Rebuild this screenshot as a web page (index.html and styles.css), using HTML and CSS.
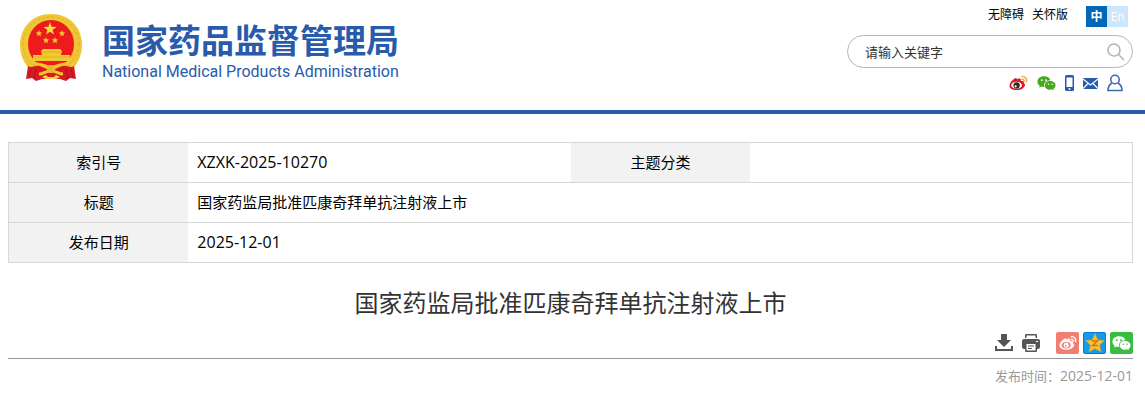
FILE: index.html
```html
<!DOCTYPE html>
<html lang="zh-CN">
  <head>
    <meta charset="UTF-8" />
    <meta name="viewport" content="width=device-width, initial-scale=1.0" />
    <title>国家药监局批准匹康奇拜单抗注射液上市</title>
    <link rel="stylesheet" href="styles.css">
  </head>

  <body>
    <svg class="sprite" aria-hidden="true">
      <symbol id="weibo-body" viewBox="0 0 20 16">
        <path fill="currentColor" d="M8 4C11 2.400 13 3 12.500 6C15 5.400 16.500 6.800 15.300 8.200C17.300 9 17.400 11.300 15 13.200C11.500 16.200 3.800 16.300 1.300 13.300C-.700 10.500 1.600 6.500 4.800 4C6.800 2.400 8.500 2.300 8 4Z"/>
      </symbol>
      <symbol id="wechat" viewBox="0 0 20 16">
        <path fill="currentColor" d="M7.500 1C3.400 1 .5 3.500.5 6.600C.5 8.400 1.400 9.900 2.900 10.900L2.300 13L4.700 11.800C5.700 12.100 6.500 12.200 7.600 12.100C6.600 8.400 9.400 5.200 14 5.200C13.400 2.700 10.800 1 7.500 1Z"/>
        <path fill="currentColor" d="M13.800 6C10.400 6 8.200 8 8.200 10.500C8.200 13.100 10.600 15 13.800 15C14.500 15 15.200 14.900 15.800 14.700L17.800 15.700L17.300 14C18.700 13.100 19.500 11.900 19.500 10.500C19.500 8 17 6 13.800 6Z"/>
        <g class="eyes">
          <circle cx="5" cy="5" r="1"/><circle cx="9.500" cy="5" r="1"/>
          <circle cx="12" cy="9.300" r=".8"/><circle cx="15.800" cy="9.300" r=".8"/>
        </g>
      </symbol>
    </svg>

    <header class="header">
      <a class="logo" href="#">
        <svg class="emblem" viewBox="0 0 62 68" aria-hidden="true">
          <!-- 麦穗圈 -->
          <path fill="#efc736" d="M31 0C49 0 62 13 62 31C62 42 57 52 49 58H13C5 52 0 42 0 31C0 13 13 0 31 0Z"/>
          <ellipse cx="31" cy="30" rx="28" ry="27" fill="none" stroke="#dfb02a" stroke-dasharray="3 2"/>
          <ellipse cx="31" cy="30" rx="23" ry="24" fill="#ed1b1b"/>
          <!-- 五星 -->
          <path fill="#f8dc3c" d="M30 8L31.600 12.800L36.500 12.900L32.600 15.900L34 20.500L30 17.700L26 20.500L27.400 15.900L23.500 12.900L28.400 12.800Z"/>
          <g fill="#f4cb32">
            <path id="star" d="M19 16L19.900 18.300L22.300 18.400L20.400 19.900L21 22.200L19 20.900L17 22.200L17.600 19.900L15.700 18.400L18.100 18.300Z"/>
            <use href="#star" x="23"/>
            <use href="#star" x="7" y="7"/>
            <use href="#star" x="16" y="7"/>
          </g>
          <!-- 天安门 -->
          <path fill="#f0cb30" d="M23 35H40L42 37L41 41H50V47H13V41H22L21 37Z"/>
          <path d="M22 38H41M13 43H50" stroke="#dda51f" stroke-width=".7"/>
          <!-- 红绸 -->
          <path fill="#d81922" d="M8 52C12 55 16 50 20 52L31 57L42 52C46 50 50 55 54 52L56 65L50 64L46 67L40 65H22L16 67L12 64L6 65Z"/>
          <path d="M11 55L9 64M16 55L14 65M46 55L48 65M51 55L53 64" stroke="#a80f1b" stroke-width=".8"/>
          <path fill="none" stroke="#f1c72b" stroke-width="3" d="M15 50C22 49 24 53 31 53S40 49 47 50M19 60C24 60 25 57 31 57S38 60 43 60"/>
          <circle cx="31" cy="55" r="4" fill="#ebba2a"/>
          <path fill="#f5d34b" d="M22 63L26 61L28 63H34L36 61L40 63L36 65H26Z"/>
        </svg>
        <span class="logo-text">
          <span class="logo-cn">国家药品监督管理局</span>
          <span class="logo-en" lang="en">National Medical Products Administration</span>
        </span>
      </a>

      <div class="tools">
        <nav class="top-links">
          <a href="#">无障碍</a>
          <a href="#">关怀版</a>
          <span class="lang">
            <a class="active" href="#">中</a><a href="#" lang="en">En</a>
          </span>
        </nav>

        <form class="search">
          <input type="text" placeholder="请输入关键字" aria-label="请输入关键字" />
          <button type="button" aria-label="搜索">
            <svg width="18" height="18" viewBox="0 0 18 18" fill="none" stroke="#b5b5b5" stroke-width="1.600">
              <circle cx="7" cy="7" r="6"/><path d="M11.500 11.500L17 17"/>
            </svg>
          </button>
        </form>

        <nav class="social">
          <a href="#" aria-label="微博">
            <svg width="19" height="16" viewBox="0 0 20 16">
              <use href="#weibo-body" color="#e01920"/>
              <ellipse cx="8" cy="10.300" rx="5.600" ry="3.700" fill="#fff"/>
              <circle cx="8" cy="10.500" r="3.300" fill="#2d2525"/>
              <circle cx="7" cy="11.500" r="1.200" fill="#fff"/>
              <path d="M13 1.200C17 .2 19.500 3.500 18.200 7M13.200 4C15.300 3.500 16.200 5 15.700 6.500" fill="none" stroke="#f3a62c" stroke-width="1.500"/>
            </svg>
          </a>
          <a class="green" href="#" aria-label="微信">
            <svg width="19" height="16"><use href="#wechat"/></svg>
          </a>
          <a href="#" aria-label="手机版">
            <svg width="9" height="16" viewBox="0 0 9 16">
              <rect width="9" height="16" rx="1.500" fill="#285bac"/>
              <rect x="1.500" y="2.500" width="6" height="9.500" fill="#fff"/>
              <circle cx="4.500" cy="14" r="1" fill="#fff"/>
            </svg>
          </a>
          <a href="#" aria-label="邮箱">
            <svg width="15" height="11" viewBox="0 0 15 11">
              <rect width="15" height="11" fill="#285bac"/>
              <path d="M0 1L7.500 7L15 1M0 10.500L5.300 5.300M15 10.500L9.700 5.300" fill="none" stroke="#fff" stroke-width="1.200"/>
            </svg>
          </a>
          <a href="#" aria-label="个人中心">
            <svg width="16" height="18" viewBox="0 0 16 18" fill="none" stroke="#4568b5" stroke-width="1.600">
              <circle cx="8" cy="5.500" r="4.300"/>
              <path d="M5 9C2.500 10.500 1 12.500 1 16.500H15C15 12.500 13.500 10.500 11 9"/>
            </svg>
          </a>
        </nav>
      </div>
    </header>

    <main class="content">
      <table class="info">
        <tr>
          <th scope="row">索引号</th>
          <td class="latin">XZXK-2025-10270</td>
          <th scope="row">主题分类</th>
          <td></td>
        </tr>
        <tr>
          <th scope="row">标题</th>
          <td colspan="3">国家药监局批准匹康奇拜单抗注射液上市</td>
        </tr>
        <tr>
          <th scope="row">发布日期</th>
          <td class="latin" colspan="3">2025-12-01</td>
        </tr>
      </table>

      <h1 class="title">国家药监局批准匹康奇拜单抗注射液上市</h1>

      <div class="actions">
        <button type="button" aria-label="下载">
          <svg width="18" height="18" viewBox="0 0 18 18" fill="#555">
            <path d="M6 0H12V6H16L9 13L2 6H6Z"/>
            <path d="M0 12H2V15H16V12H18V17H0Z"/>
          </svg>
        </button>
        <button type="button" aria-label="打印">
          <svg width="18" height="18" viewBox="0 0 18 18">
            <path fill="#555" d="M4 0H14Q15 0 15 1V4H3V1Q3 0 4 0ZM2 5H16Q18 5 18 7V13Q18 15 16 15H15V17Q15 18 14 18H4Q3 18 3 17V15H2Q0 15 0 13V7Q0 5 2 5Z"/>
            <path fill="#fff" d="M4.500 1.500H13.500V5H4.500ZM4.500 10H13.500V16.500H4.500ZM14 7H16V8H14Z"/>
            <path d="M6 12H12M6 14.500H10" stroke="#555"/>
          </svg>
        </button>
        <div class="share">
          <button class="share-weibo" type="button" aria-label="分享到微博">
            <svg width="18" height="16" viewBox="0 0 20 16">
              <use href="#weibo-body" color="#fff"/>
              <ellipse cx="8" cy="10.500" rx="5" ry="3.500" fill="#f17e70"/>
              <circle cx="8" cy="10.500" r="2.800" fill="#fff"/>
              <circle cx="7.500" cy="11" r="1" fill="#f17e70"/>
              <path d="M13 1.200C17 .2 19.500 3.500 18.200 7M13.200 4C15.300 3.500 16.200 5 15.700 6.500" fill="none" stroke="#fff" stroke-width="1.400"/>
            </svg>
          </button>
          <button class="share-qzone" type="button" aria-label="分享到QQ空间">
            <svg width="20" height="20" viewBox="0 0 20 20">
              <path fill="#fdc12b" stroke="#e79b13" stroke-width=".5" d="M10 .5L12.800 7L19.500 7.600L14.500 12L16 19L10 15.500L4 19L5.500 12L.5 7.600L7.200 7Z"/>
              <path d="M7 8H12.500L7.500 12.500H13" fill="none" stroke="#c9780f" stroke-width="1.300"/>
            </svg>
          </button>
          <button class="share-wechat" type="button" aria-label="分享到微信">
            <svg width="19" height="16"><use href="#wechat"/></svg>
          </button>
        </div>
      </div>

      <p class="publish">发布时间：<time datetime="2025-12-01">2025-12-01</time></p>
    </main>
  </body>
</html>
```

FILE: styles.css
```css
* {
  box-sizing: border-box;
}

body {
  margin: 0;
  font-family: "Open Sans", "Noto Sans CJK SC", sans-serif;
  font-size: 15px;
  color: #000;
  background: #fff;
}

a {
  color: inherit;
  text-decoration: none;
}

button {
  display: flex;
  align-items: center;
  justify-content: center;
  padding: 0;
  border: 0;
  background: none;
  cursor: pointer;
}

svg {
  display: block;
}

.sprite {
  display: none;
}

/* 页头 */
.header {
  display: flex;
  justify-content: space-between;
  align-items: flex-start;
  padding: 6px 12px 18px 20px;
  border-bottom: 4px solid #285bac;
}

.logo {
  display: flex;
  gap: 20px;
  padding-top: 8px;
  color: #285bac;
}

.emblem {
  width: 62px;
  height: 68px;
}

.logo-text {
  display: flex;
  flex-direction: column;
  padding-top: 7px;
  white-space: nowrap;
}

.logo-cn {
  font-family: "Noto Sans CJK SC", sans-serif;
  font-size: 33px;
  font-weight: bold;
  line-height: 36px;
}

.logo-en {
  font-family: Roboto, "Liberation Sans", sans-serif;
  font-size: 16px;
  line-height: 30px;
}

.tools {
  display: flex;
  flex-direction: column;
  width: 286px;
}

.top-links {
  display: flex;
  justify-content: flex-end;
  gap: 8px;
  padding-right: 5px;
  font-size: 12px;
  line-height: 18px;
}

.lang {
  display: flex;
  margin-left: 10px;
  line-height: 21px;
  text-align: center;
  color: #fff;
  background: #cce6ff;
}

.lang a {
  width: 21px;
}

.lang .active {
  font-weight: bold;
  background: #0068b7;
}

.search {
  display: flex;
  align-items: center;
  height: 33px;
  margin-top: 8px;
  padding: 0 7px 0 17px;
  border: 1px solid #b5b5b5;
  border-radius: 17px;
}

.search input {
  flex: 1;
  min-width: 0;
  padding: 0;
  border: 0;
  outline: 0;
  font: 13px "Noto Sans CJK SC", sans-serif;
  background: none;
}

.search input::placeholder {
  color: #333;
}

.social {
  display: flex;
  justify-content: flex-end;
  align-items: center;
  gap: 9px;
  height: 18px;
  margin-top: 6px;
  padding-right: 10px;
}

.green {
  color: #45a91c;
}

.eyes {
  fill: var(--eyes, #fff);
}

/* 正文 */
.content {
  padding: 28px 12px 12px 8px;
}

.info {
  width: 100%;
  table-layout: fixed;
  border: 1px solid #d7d7d7;
  border-collapse: collapse;
}

.info tr {
  border-bottom: 1px solid #d7d7d7;
}

.info th,
.info td {
  height: 40px;
  padding: 0 9px 2px;
  line-height: 24px;
}

.info th {
  width: 16%;
  font-weight: normal;
  text-align: center;
  background: #f2f2f2;
}

.info .latin {
  font-size: 16px;
}

.title {
  margin: 20px 0 9px;
  font-size: 24px;
  font-weight: normal;
  line-height: 40px;
  text-align: center;
  color: #333;
}

.actions {
  display: flex;
  justify-content: flex-end;
  align-items: center;
  gap: 9px;
  padding-bottom: 4px;
  border-bottom: 1px solid #999;
}

.share {
  display: flex;
  gap: 4px;
  margin-left: 7px;
}

.share button {
  width: 23px;
  height: 22px;
  border-radius: 2px;
  color: #fff;
}

.share-weibo {
  background: #f17e70;
}

.share .share-qzone {
  border: 1px solid #087bd0;
  background: #159bed;
}

.share-wechat {
  --eyes: #38bd42;
  background: #38bd42;
}

.publish {
  margin: 5px 0 0;
  font-size: 13px;
  line-height: 24px;
  text-align: right;
  color: #999;
}

.publish time {
  font-size: 14px;
}
```
